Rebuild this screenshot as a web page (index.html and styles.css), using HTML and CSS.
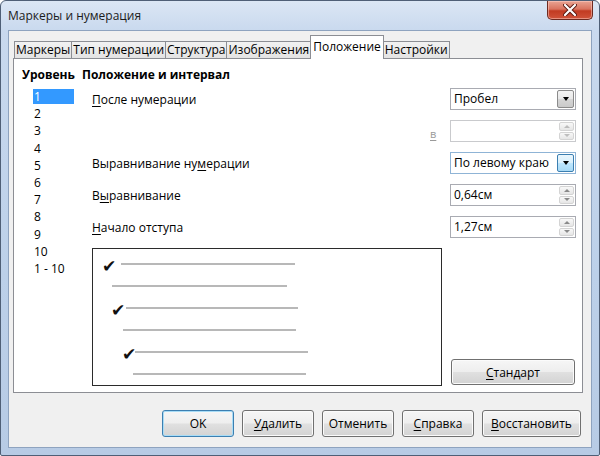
FILE: index.html
```html
<!DOCTYPE html>
<html lang="ru">
<head>
  <meta charset="UTF-8">
  <title>Маркеры и нумерация</title>
  <link rel="stylesheet" href="styles.css">
</head>
<body>
  <div class="window">
    <div class="titlebar">
      <span class="title">Маркеры и нумерация</span>
      <div class="close">
        <svg width="14" height="12" viewBox="0 0 14 12">
          <path d="M2 1 L12 11 M12 1 L2 11" stroke="#5a1a12" stroke-width="4" stroke-linecap="round"/>
          <path d="M2 1 L12 11 M12 1 L2 11" stroke="#fff" stroke-width="2.2" stroke-linecap="round"/>
        </svg>
      </div>
    </div>

    <div class="client">
      <div class="tabs">
        <div class="tab">Маркеры</div>
        <div class="tab">Тип нумерации</div>
        <div class="tab">Структура</div>
        <div class="tab">Изображения</div>
        <div class="tab active">Положение</div>
        <div class="tab">Настройки</div>
      </div>

      <div class="panel">
        <div class="levels">
          <div class="heading">Уровень</div>
          <ul class="level-list">
            <li class="selected">1</li>
            <li>2</li>
            <li>3</li>
            <li>4</li>
            <li>5</li>
            <li>6</li>
            <li>7</li>
            <li>8</li>
            <li>9</li>
            <li>10</li>
            <li>1 - 10</li>
          </ul>
        </div>

        <div class="position">
          <div class="heading">Положение и интервал</div>
          <div class="form">
            <label class="label"><u>П</u>осле нумерации</label>
            <span class="hint"></span>
            <div class="combo">
              <span class="value">Пробел</span>
              <span class="drop"><i class="arrow"></i></span>
            </div>

            <span class="label"></span>
            <span class="hint"><u>в</u></span>
            <div class="spin disabled">
              <span class="value"></span>
              <span class="spin-btns"><i class="up"></i><i class="down"></i></span>
            </div>

            <label class="label">Выравнивание ну<u>м</u>ерации</label>
            <span class="hint"></span>
            <div class="combo focused">
              <span class="value">По левому краю</span>
              <span class="drop"><i class="arrow"></i></span>
            </div>

            <label class="label">В<u>ы</u>равнивание</label>
            <span class="hint"></span>
            <div class="spin">
              <span class="value">0,64см</span>
              <span class="spin-btns"><i class="up"></i><i class="down"></i></span>
            </div>

            <label class="label"><u>Н</u>ачало отступа</label>
            <span class="hint"></span>
            <div class="spin">
              <span class="value">1,27см</span>
              <span class="spin-btns"><i class="up"></i><i class="down"></i></span>
            </div>
          </div>

          <div class="preview-row">
            <div class="preview">
              <div class="pv pv1"><span class="check">✔</span><span class="line w174"></span></div>
              <div class="pv pv2"><span class="line w175"></span></div>
              <div class="pv pv3"><span class="check">✔</span><span class="line w172"></span></div>
              <div class="pv pv4"><span class="line w173"></span></div>
              <div class="pv pv5"><span class="check">✔</span><span class="line w173"></span></div>
              <div class="pv pv6"><span class="line w173"></span></div>
            </div>
            <button class="btn std"><u>С</u>тандарт</button>
          </div>
        </div>
      </div>

      <div class="buttons">
        <button class="btn default">OK</button>
        <button class="btn"><u>У</u>далить</button>
        <button class="btn">Отменить</button>
        <button class="btn"><u>С</u>правка</button>
        <button class="btn wide"><u>В</u>осстановить</button>
      </div>
    </div>
  </div>
</body>
</html>
```

FILE: styles.css
```css
* {
  box-sizing: border-box;
}
body {
  margin: 0;
  font-family: "Open Sans", "Noto Sans", sans-serif;
  font-size: 12px;
  color: #000;
  background: #fff;
}
u {
  text-decoration: underline;
  text-underline-offset: 2px;
}

/* window frame */
.window {
  width: 600px;
  height: 456px;
  border: 1px solid #4f5f76;
  border-radius: 6px 6px 2px 2px;
  padding: 0 7px 7px 7px;
  background: linear-gradient(180deg, #dbe6f4 0px, #c9d9ee 30px, #bcd0e9 60%, #b7cbe5 100%);
  display: flex;
  flex-direction: column;
}
.titlebar {
  height: 29px;
  display: flex;
  justify-content: space-between;
  align-items: flex-start;
}
.title {
  font-size: 12px;
  line-height: 29px;
  color: #1b1b1b;
}
.close {
  width: 46px;
  height: 19px;
  margin-right: -1px;
  border: 1px solid #6d2a20;
  border-top: none;
  border-radius: 0 0 5px 5px;
  background: linear-gradient(180deg, #e9a493 0%, #d9735f 45%, #c23b22 55%, #d0533a 100%);
  box-shadow: inset 0 0 0 1px rgba(255, 210, 200, 0.5);
  display: flex;
  align-items: center;
  justify-content: center;
}
.client {
  flex: 1;
  background: #f0f0f0;
  border: 1px solid #8ea3bf;
  padding: 4px 8px 0 4px;
  display: flex;
  flex-direction: column;
}

/* tabs */
.tabs {
  display: flex;
  align-items: flex-end;
  padding-left: 1px;
  height: 23px;
  position: relative;
  z-index: 1;
}
.tab {
  height: 17px;
  padding: 0 1px;
  line-height: 15px;
  border: 1px solid #8c8e94;
  border-bottom: none;
  margin-right: -1px;
  background: linear-gradient(180deg, #f2f2f2, #e3e3e3);
  white-space: nowrap;
}
.tab.active {
  line-height: 21px;
  padding: 0 2px 2px;
  background: #fff;
  margin-bottom: -1px;
  height: 24px;
}

/* tab page */
.panel {
  height: 335px;
  background: #fff;
  border: 1px solid #8c8e94;
  padding: 8px 6px 0 8px;
  display: flex;
}
.heading {
  font-weight: bold;
  line-height: 16px;
  white-space: nowrap;
}
.levels {
  width: 60px;
}
.level-list {
  list-style: none;
  margin: 6px 0 0;
  padding: 0 0 0 11px;
}
.level-list li {
  height: 17.2px;
  line-height: 15px;
  padding-left: 1px;
  white-space: nowrap;
}
.level-list li.selected {
  width: 41px;
  height: 15px;
  margin-bottom: 2.2px;
  background: #3399ff;
  color: #fff;
}
.position {
  flex: 1;
}
.form {
  margin-top: 5px;
  padding-left: 10px;
  display: grid;
  grid-template-columns: 1fr 20px 126px;
  grid-auto-rows: 22px;
  row-gap: 10px;
  column-gap: 0;
  align-items: center;
}
.label {
  white-space: nowrap;
}
.hint {
  color: #9a9a9a;
  font-size: 11px;
  padding-top: 4px;
}

/* combo box */
.combo,
.spin {
  height: 22px;
  display: flex;
  align-items: stretch;
  border: 1px solid #a9abb2;
  background: #fff;
}
.value {
  flex: 1;
  padding-left: 3px;
  line-height: 20px;
  white-space: nowrap;
}
.drop {
  width: 17px;
  margin: 1px;
  border: 1px solid #8b8b8b;
  border-radius: 2px;
  background: linear-gradient(180deg, #f3f3f3 0%, #e8e8e8 50%, #d6d6d6 51%, #cacaca 100%);
  display: flex;
  align-items: center;
  justify-content: center;
}
.combo.focused {
  border-color: #8fb4d6;
}
.combo.focused .drop {
  border-color: #3c7fb1;
  background: linear-gradient(180deg, #eaf6fd 0%, #d9f0fc 50%, #bee6fd 51%, #a7d9f5 100%);
}
.arrow {
  width: 0;
  height: 0;
  border-left: 3.5px solid transparent;
  border-right: 3.5px solid transparent;
  border-top: 4px solid #000;
}

/* spin field */
.spin-btns {
  width: 15px;
  margin: 1px 1px 1px 0;
  display: flex;
  flex-direction: column;
  gap: 1px;
}
.spin-btns i {
  flex: 1;
  border: 1px solid #d4d4d4;
  border-radius: 2px;
  background: linear-gradient(180deg, #f8f8f8, #e6e6e6);
  display: flex;
  align-items: center;
  justify-content: center;
}
.spin-btns i::after {
  content: "";
  width: 0;
  height: 0;
  border-left: 3px solid transparent;
  border-right: 3px solid transparent;
}
.spin-btns .up::after {
  border-bottom: 3px solid #8a8a8a;
}
.spin-btns .down::after {
  border-top: 3px solid #8a8a8a;
}
.spin.disabled {
  border-color: #c9cacd;
}
.spin.disabled .spin-btns i::after {
  opacity: 0.5;
}

/* preview */
.preview-row {
  margin-top: 10px;
  padding-left: 10px;
  display: flex;
  justify-content: space-between;
  align-items: flex-end;
}
.preview {
  width: 350px;
  height: 138px;
  border: 1.5px solid #2b2b2b;
  padding-top: 4px;
}
.pv {
  height: 22px;
  display: flex;
  align-items: center;
}
.check {
  font-family: "DejaVu Sans", sans-serif;
  font-size: 17px;
  font-weight: bold;
  line-height: 14px;
  width: 13px;
  color: #111;
  position: relative;
  top: 2px;
}
.line {
  height: 2px;
  background: #b8b8b8;
}
.pv1 { padding-left: 9px; }
.pv1 .line { margin-left: 6px; }
.pv2 { padding-left: 19px; }
.pv3 { padding-left: 18px; }
.pv3 .line { margin-left: 2px; }
.pv4 { padding-left: 30px; }
.pv5 { padding-left: 29px; }
.pv5 .line { margin-left: 0; }
.pv6 { padding-left: 40px; }
.w172 { width: 172px; }
.w173 { width: 173px; }
.w174 { width: 174px; }
.w175 { width: 175px; }

/* buttons */
.btn {
  font-family: inherit;
  font-size: 12px;
  color: #000;
  height: 27px;
  width: 72px;
  padding: 0;
  border: 1px solid #707070;
  border-radius: 3px;
  background: linear-gradient(180deg, #f6f6f6 0%, #eeeeee 48%, #e0e0e0 52%, #d3d3d3 100%);
  box-shadow: inset 0 0 0 1px #fbfbfb;
}
.btn.std {
  width: 124px;
  height: 26px;
  margin-right: 1px;
  margin-bottom: 1px;
}
.btn.default {
  border-color: #3c7fb1;
  box-shadow: inset 0 0 0 1px #a8dcf6;
}
.btn.wide {
  width: 99px;
}
.buttons {
  margin-top: 17px;
  padding-right: 2px;
  display: flex;
  justify-content: flex-end;
  gap: 8px;
}
```
